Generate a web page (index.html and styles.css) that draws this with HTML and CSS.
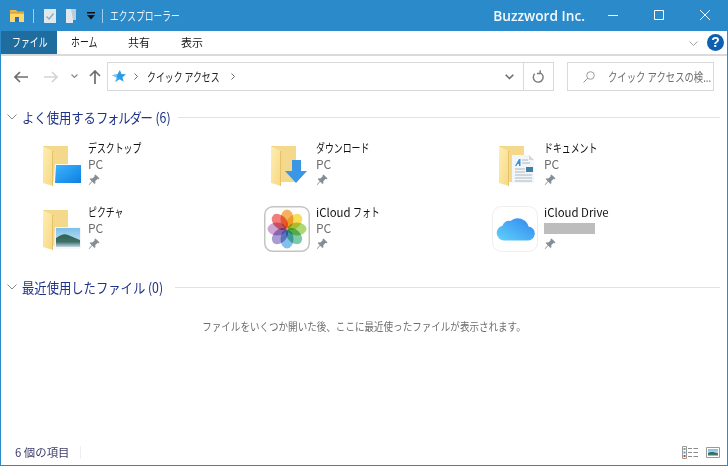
FILE: index.html
```html
<!DOCTYPE html>
<html lang="ja">
<head>
<meta charset="utf-8">
<title>エクスプローラー</title>
<link rel="stylesheet" href="styles.css">
</head>
<body>
<svg class="defs" width="0" height="0">
  <defs>
    <linearGradient id="sky" x1="0" y1="0" x2="1" y2="1"><stop offset="0" stop-color="#3fb4ff"/><stop offset="1" stop-color="#0b7fe0"/></linearGradient>
    <linearGradient id="cloud" x1="0" y1="1" x2="1" y2="0"><stop offset="0" stop-color="#62d2f8"/><stop offset="1" stop-color="#2f86f2"/></linearGradient>
    <linearGradient id="air" x1="0" y1="0" x2="0" y2="1"><stop offset="0" stop-color="#7cc0ea"/><stop offset="1" stop-color="#d4ecf5"/></linearGradient>
    <linearGradient id="ground" x1="0" y1="0" x2="0" y2="1"><stop offset="0" stop-color="#2f6350"/><stop offset=".6" stop-color="#3d6f68"/><stop offset="1" stop-color="#c3d7df"/></linearGradient>
    <linearGradient id="leaf" x1="0" y1="0" x2="1" y2="1"><stop offset="0" stop-color="#fdeeb4"/><stop offset="1" stop-color="#f7d883"/></linearGradient>
    <symbol id="folder" viewBox="0 0 48 48">
      <path d="M7 3h25v36H7z" fill="#ecca74"/>
      <path d="M10 3h22v36H17z" fill="#f4d98c"/>
      <path d="M7 3l10 5v35L7 40z" fill="url(#leaf)"/>
      <path d="M17 8v35l-1-.4V8z" fill="#e7c163"/>
    </symbol>
    <symbol id="pin" viewBox="0 0 12 12">
      <path d="M7.500.5L11.500 4.500 10.500 5.200 9.500 5 7.200 7.300 7.500 9 6.500 10 4.300 7.800 1.200 11 .7 10.500 3.800 7.300 1.700 5.200 2.700 4.200 4.400 4.500 6.700 2.200 6.500 1.200z" fill="#858d95"/>
    </symbol>
  </defs>
</svg>
<div class="window">
  <header class="titlebar">
    <svg class="qa-folder" width="14" height="12" viewBox="0 0 14 12"><path d="M0 0h6l1.500 1.500H14V12H0z" fill="#e9b949"/><path d="M0 3h14v9H0z" fill="#fbd968"/><path d="M5 7h4v5H5z" fill="#2b6fb5"/><path d="M0 2.500h14v1H0z" fill="#c98f2a"/></svg>
    <span class="qa-sep"></span>
    <svg class="qa-check" width="12" height="14" viewBox="0 0 12 14"><path d="M0 0h12v14H0z" fill="#dfe8ee"/><path d="M2.500 7.500l2.500 2.500L9.500 4.500" fill="none" stroke="#8fa4b4" stroke-width="1.200"/></svg>
    <svg class="qa-note" width="10" height="14" viewBox="0 0 10 14"><path d="M0 0h10v11H7v3H0z" fill="#dfe8ee"/><path d="M5 0h5v11H7z" fill="#b9ccd9"/></svg>
    <svg class="qa-drop" width="8" height="8" viewBox="0 0 8 8"><path d="M0 0h8v1.500H0zM0 3h8L4 7.500z" fill="#111"/></svg>
    <span class="qa-sep qa-sep-last"></span>
    <span class="app-title kana">エクスプローラー</span>
    <span class="brand">Buzzword Inc.</span>
    <div class="caption">
      <svg width="46" height="31" viewBox="0 0 46 31"><path d="M18 15.500h10" stroke="#fff"/></svg>
      <svg width="46" height="31" viewBox="0 0 46 31"><path d="M18.500 10.500h9v9h-9z" fill="none" stroke="#fff"/></svg>
      <svg width="46" height="31" viewBox="0 0 46 31"><path d="M18 10l10 10M28 10L18 20" stroke="#fff" fill="none"/></svg>
    </div>
  </header>

  <nav class="ribbon">
    <span class="tab tab-file"><span class="kana">ファイル</span></span>
    <span class="tab tab-home"><span class="kana">ホーム</span></span>
    <span class="tab tab-share">共有</span>
    <span class="tab tab-view">表示</span>
    <svg class="ribbon-fold" width="9" height="5" viewBox="0 0 9 5"><path d="M.5.500l4 4 4-4" fill="none" stroke="#a5a5a5"/></svg>
    <span class="help">?</span>
  </nav>

  <div class="navbar">
    <svg class="nav-back" width="14" height="12" viewBox="0 0 14 12"><path d="M6 1L1 6l5 5M1.500 6H14" fill="none" stroke="#6d6d6d" stroke-width="1.700"/></svg>
    <svg class="nav-forward" width="14" height="12" viewBox="0 0 14 12"><path d="M8 1l5 5-5 5M12.500 6H0" fill="none" stroke="#d4d4d4" stroke-width="1.700"/></svg>
    <svg class="nav-recent" width="7" height="5" viewBox="0 0 7 5"><path d="M.5.500l3 3 3-3" fill="none" stroke="#8a8a8a" stroke-width="1.200"/></svg>
    <svg class="nav-up" width="12" height="14" viewBox="0 0 12 14"><path d="M1 6l5-5 5 5M6 1.500V14" fill="none" stroke="#6d6d6d" stroke-width="1.700"/></svg>
    <div class="address">
      <svg class="addr-star" width="14" height="13" viewBox="0 0 15 14"><path d="M8.500 0l1.600 4.300L15 4.700l-3.700 3 1.200 5-4.300-2.800L3.500 13l1.600-4.800L0 5.600l5.800-.9z" fill="#2e9be8"/><path d="M3.500 13l3-4.500L0 5.600l5.800-.9z" fill="#7cc6f5"/></svg>
      <svg class="crumb-arrow" width="4" height="7" viewBox="0 0 4 7"><path d="M.5.500l3 3-3 3" fill="none" stroke="#6d6d6d"/></svg>
      <span class="crumb"><span class="kana">クイック アクセス</span></span>
      <svg class="crumb-arrow" width="4" height="7" viewBox="0 0 4 7"><path d="M.5.500l3 3-3 3" fill="none" stroke="#6d6d6d"/></svg>
      <svg class="addr-drop" width="9" height="6" viewBox="0 0 9 6"><path d="M.7.700l3.800 3.800L8.300.700" fill="none" stroke="#666" stroke-width="1.500"/></svg>
      <span class="addr-refresh">
        <svg width="12" height="13" viewBox="0 0 11 12"><path d="M7 2.400A4.500 4.500 0 1 1 2.500 3.500M7.500 .2v3h-3" fill="none" stroke="#7a7a7a" stroke-width="1.300"/></svg>
      </span>
    </div>
    <div class="search">
      <svg class="search-glass" width="12" height="12" viewBox="0 0 12 12"><circle cx="7.500" cy="4.500" r="3.800" fill="none" stroke="#9a9a9a"/><path d="M4.700 7.300L.5 11.500" stroke="#c08a6a"/></svg>
      <span class="search-text kana">クイック アクセスの検...</span>
    </div>
  </div>

  <main class="content">
    <section class="group">
      <h2 class="group-head">
        <svg width="10" height="6" viewBox="0 0 10 6"><path d="M.5.500L5 5 9.500.500" fill="none" stroke="#8a8a8a"/></svg>
        <span class="head-text head-pinned"><span class="head-label">よく使用する<span class="kana-tight">フォルダー</span> (6)</span></span>
        <i class="group-rule"></i>
      </h2>
      <div class="items">
        <article class="item">
          <svg class="icon" width="48" height="48" viewBox="0 0 48 48">
            <use href="#folder"/>
            <path d="M19 21h27v21H17z" fill="#fff" opacity=".85"/>
            <path d="M20 22h25v18H19z" fill="url(#sky)"/>
          </svg>
          <div class="meta"><span class="name"><span class="kana">デスクトップ</span></span><span class="sub">PC</span><svg class="pin"><use href="#pin"/></svg></div>
        </article>
        <article class="item">
          <svg class="icon" width="48" height="48" viewBox="0 0 48 48">
            <use href="#folder"/>
            <path d="M28 17h9v11h6L32 40 21 28h7z" fill="#3b96e4"/>
          </svg>
          <div class="meta"><span class="name"><span class="kana">ダウンロード</span></span><span class="sub">PC</span><svg class="pin"><use href="#pin"/></svg></div>
        </article>
        <article class="item">
          <svg class="icon" width="48" height="48" viewBox="0 0 48 48">
            <use href="#folder"/>
            <path d="M20 12h17l5 5v23H20z" fill="#f3f6f8"/>
            <path d="M37 12l5 5h-5z" fill="#cfd8df"/>
            <path d="M23 23l4-7h1.500v7H27v-2h-1.500l-1 2z" fill="#3f8fd8"/>
            <path d="M30 17h6M30 20h8M23 26h10M23 29h10M23 32h17M23 35h17M23 38h17" stroke="#aeb8c0"/>
            <path d="M34 24h7v5h-7z" fill="#3f7ea8"/>
          </svg>
          <div class="meta"><span class="name"><span class="kana">ドキュメント</span></span><span class="sub">PC</span><svg class="pin"><use href="#pin"/></svg></div>
        </article>
        <article class="item">
          <svg class="icon" width="48" height="48" viewBox="0 0 48 48">
            <use href="#folder"/>
            <path d="M19 20h26v22H18z" fill="#f4f6f7" opacity=".9"/>
            <path d="M20 21h24v19H20z" fill="url(#air)"/>
            <path d="M20 31c5-3 8-5 12-3s8 3 12 5v7H20z" fill="url(#ground)"/>
          </svg>
          <div class="meta"><span class="name"><span class="kana">ピクチャ</span></span><span class="sub">PC</span><svg class="pin"><use href="#pin"/></svg></div>
        </article>
        <article class="item">
          <svg class="icon icon-app" width="48" height="48" viewBox="0 0 48 48">
            <rect x=".75" y=".75" width="44.500" height="44.500" rx="8" fill="#fff" stroke="#c4c4c4" stroke-width="1.500"/>
            <g class="petals">
              <ellipse cx="23" cy="13" rx="6.500" ry="9.500" fill="#f5a94a"/>
              <ellipse cx="23" cy="13" rx="6.500" ry="9.500" fill="#f5dc4a" transform="rotate(45 23 23)"/>
              <ellipse cx="23" cy="13" rx="6.500" ry="9.500" fill="#a4d468" transform="rotate(90 23 23)"/>
              <ellipse cx="23" cy="13" rx="6.500" ry="9.500" fill="#6cc4a0" transform="rotate(135 23 23)"/>
              <ellipse cx="23" cy="13" rx="6.500" ry="9.500" fill="#74b8e8" transform="rotate(180 23 23)"/>
              <ellipse cx="23" cy="13" rx="6.500" ry="9.500" fill="#a090d0" transform="rotate(225 23 23)"/>
              <ellipse cx="23" cy="13" rx="6.500" ry="9.500" fill="#c89cd0" transform="rotate(270 23 23)"/>
              <ellipse cx="23" cy="13" rx="6.500" ry="9.500" fill="#f0706c" transform="rotate(315 23 23)"/>
            </g>
          </svg>
          <div class="meta"><span class="name">iCloud <span class="kana">フォト</span></span><span class="sub">PC</span><svg class="pin"><use href="#pin"/></svg></div>
        </article>
        <article class="item">
          <svg class="icon icon-app" width="48" height="48" viewBox="0 0 48 48">
            <rect x=".5" y=".5" width="45" height="45" rx="9" fill="#fff" stroke="#eeeeee"/>
            <path d="M12 34.500a7.500 7.500 0 0 1-1.500-14.800 6.500 6.500 0 0 1 8-4.700 11 11 0 0 1 18 5.500 7 7 0 0 1-1.500 14z" fill="url(#cloud)"/>
          </svg>
          <div class="meta"><span class="name">iCloud Drive</span><span class="redacted"></span><svg class="pin"><use href="#pin"/></svg></div>
        </article>
      </div>
    </section>

    <section class="group group-recent">
      <h2 class="group-head">
        <svg width="10" height="6" viewBox="0 0 10 6"><path d="M.5.500L5 5 9.500.500" fill="none" stroke="#8a8a8a"/></svg>
        <span class="head-text head-recent"><span class="head-label">最近使用したファイル (0)</span></span>
        <i class="group-rule"></i>
      </h2>
      <p class="empty">ファイルをいくつか開いた後、ここに最近使ったファイルが表示されます。</p>
    </section>
  </main>

  <footer class="statusbar">
    <span class="count">6 個の項目</span>
    <i class="status-sep"></i>
    <svg class="view-details" width="16" height="13" viewBox="0 0 16 13">
      <path d="M.5.500h4v12h-4z" fill="#fff" stroke="#9a9a9a"/>
      <path d="M1.500 2h2v2h-2z" fill="#7fa18a"/><path d="M1.500 5.500h2v2h-2z" fill="#5a9be0"/><path d="M1.500 9h2v2h-2z" fill="#d0443a"/>
      <path d="M6 2.500h4M11.500 2.500H16M6 6.500h4M11.500 6.500H16M6 10.500h4M11.500 10.500H16" stroke="#8a8a8a"/>
    </svg>
    <svg class="view-tiles" width="14" height="11" viewBox="0 0 14 11">
      <path d="M.5.500h13v10H.500z" fill="#fff" stroke="#9a9a9a"/>
      <path d="M2 2h10v7H2z" fill="url(#air)"/>
      <path d="M2 6c3-1.500 5-1.500 10 .5V9H2z" fill="url(#ground)"/>
    </svg>
  </footer>
</div>
</body>
</html>
```

FILE: styles.css
```css
* { box-sizing: border-box; }

html, body {
  margin: 0;
  height: 100%;
  overflow: hidden;
}

body {
  background: #fff;
  color: #1a1a1a;
  font: 12px/16px "Noto Sans CJK JP", "Noto Sans", sans-serif;
}

.defs { display: block; height: 0; }

/* Kana in the UI face is set narrow */
.kana {
  display: inline-block;
  white-space: pre;
  transform: scaleX(.74);
  transform-origin: left center;
}

.window {
  width: 728px;
  height: 466px;
  display: flex;
  flex-direction: column;
  border: 1px solid #2b8ac9;
  border-top: 0;
}

/* Title bar */
.titlebar {
  height: 31px;
  margin: 0 -1px;
  padding-left: 10px;
  background: #2b8ac9;
  color: #fff;
  display: flex;
  align-items: center;
  flex: none;
}
.qa-folder { margin-right: 9px; }
.qa-sep {
  width: 1px;
  height: 14px;
  background: #a5cde8;
}
.qa-check { margin-left: 10px; }
.qa-note { margin-left: 10px; }
.qa-drop { margin: 1px 0 0 11px; }
.qa-sep-last { margin-left: 7px; margin-right: 7px; }
.app-title { font-size: 12px; color: #e9f3fa; transform: scaleX(.73); }
.brand {
  margin-left: auto;
  margin-right: 5px;
  font: 600 13.700px/20px "Open Sans", sans-serif;
  color: #f3f9fd;
}
.caption { display: flex; }
.caption svg { display: block; width: 46px; }

/* Ribbon tabs */
.ribbon {
  height: 25px;
  flex: none;
  display: flex;
  align-items: flex-start;
  border-bottom: 2px solid #dadada;
}
.tab {
  height: 23px;
  line-height: 22px;
  flex: none;
  font-size: 11px;
}
.tab .kana { font-size: 12px; }
.tab-file {
  width: 56px;
  padding-left: 11px;
  background: #1f6c9f;
  color: #fff;
}
.tab-home { margin-left: 14px; width: 57px; }
.tab-share { width: 53px; }
.ribbon-fold { margin: 10px 0 0 auto; }
.help {
  width: 17px;
  height: 17px;
  margin: 3px 3px 0 9px;
  border-radius: 50%;
  background: #0f5fb0;
  color: #fff;
  font: 700 14px/17px "Liberation Sans", sans-serif;
  text-align: center;
}

/* Navigation row */
.navbar {
  height: 35px;
  flex: none;
  display: flex;
  align-items: center;
  padding: 6px 13px 0 13px;
  color: #333;
}
.nav-forward { margin-left: 16px; }
.nav-recent { margin-left: 13px; }
.nav-up { margin-left: 11px; }
.address {
  width: 448px;
  height: 29px;
  margin-left: 6px;
  padding-left: 4px;
  border: 1px solid #d9d9d9;
  display: flex;
  align-items: center;
}
.crumb-arrow { margin-left: 8px; }
.crumb { width: 76px; margin-left: 9px; color: #222; }
.addr-drop { margin-left: auto; margin-right: 9px; }
.addr-refresh {
  width: 30px;
  height: 27px;
  border-left: 1px solid #d9d9d9;
  display: flex;
  align-items: center;
  justify-content: center;
}
.search {
  width: 147px;
  height: 29px;
  margin-left: 13px;
  padding-left: 15px;
  border: 1px solid #d9d9d9;
  display: flex;
  align-items: center;
}
.search-glass { flex: none; }
.search-text {
  flex: none;
  margin-left: 13px;
  color: #6d6d6d;
  transform: scaleX(.78);
}

/* Content groups */
.content {
  flex: 1;
  min-height: 0;
  padding-top: 16px;
}
.group-head {
  margin: 0;
  height: 20px;
  padding: 0 7px 0 6px;
  display: flex;
  align-items: center;
  font-size: 14px;
  font-weight: 400;
  line-height: 20px;
  color: #1e3287;
}
.head-text { margin-left: 5px; flex: none; white-space: nowrap; }
.head-pinned { width: 148px; }
.head-recent { width: 145px; }
.head-label {
  display: inline-block;
  transform: scaleX(.88);
  transform-origin: left center;
}
.kana-tight { letter-spacing: -1.300px; margin-right: 1px; }
.group-rule {
  flex: 1;
  height: 1px;
  margin-left: 8px;
  background: #e2e2e2;
}
.items {
  display: grid;
  grid-template-columns: repeat(3, 228px);
  grid-auto-rows: 64px;
  padding: 13px 0 0 35px;
}
.item {
  display: flex;
  align-items: flex-start;
}
.icon {
  display: block;
  flex: none;
  margin-top: 3px;
}
.icon-app { margin-top: 2px; }
.petals ellipse {
  mix-blend-mode: multiply;
  opacity: .9;
}
.meta {
  margin-left: 4px;
  display: flex;
  flex-direction: column;
}
.name { color: #111; white-space: nowrap; font-size: 11.400px; }
.name .kana { font-size: 12px; }
.sub { color: #6d6d6d; }
.pin { width: 12px; height: 12px; margin-top: 2px; }
.redacted {
  width: 51px;
  height: 11px;
  margin: 3px 0 2px;
  background: #bdbdbd;
}
.group-recent { margin-top: 9px; }
.empty {
  margin: 21px 0 0;
  text-align: center;
  font-size: 11.200px;
  color: #6d6d6d;
  transform: scaleX(.853);
}

/* Status bar */
.statusbar {
  height: 26px;
  flex: none;
  display: flex;
  align-items: center;
  padding: 0 7px 0 14px;
  color: #3b3b6b;
  font-size: 11.400px;
}
.count { width: 65px; }
.status-sep { width: 1px; height: 13px; background: #eeeeee; }
.view-details { margin-left: auto; }
.view-tiles { margin-left: 8px; }
```
